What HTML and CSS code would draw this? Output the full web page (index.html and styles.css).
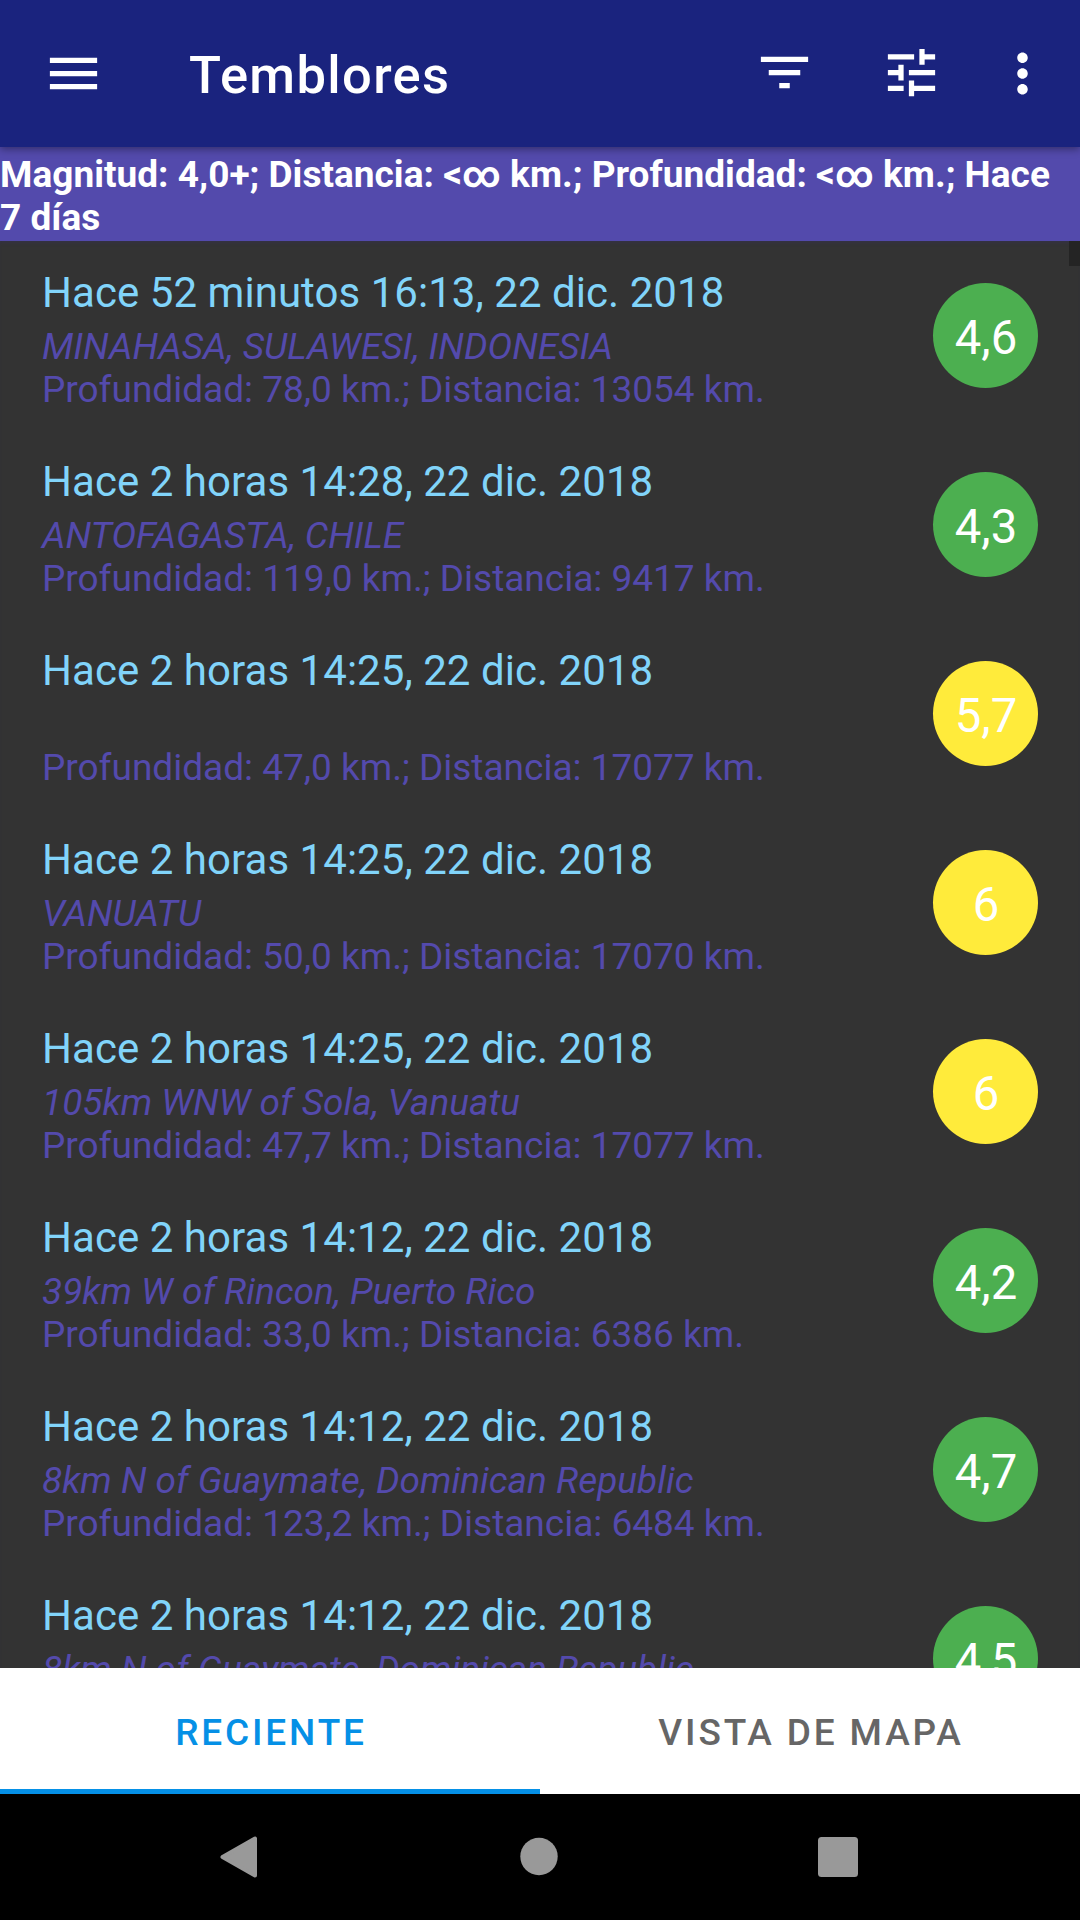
FILE: index.html
```html
<!DOCTYPE html>
<html lang="es">
<head>
<meta charset="utf-8">
<title>Temblores</title>
<link rel="stylesheet" href="styles.css">
</head>
<body>
<div class="screen">
  <header class="appbar">
    <svg class="icon" viewBox="0 0 24 24"><path d="M3 18h18v-2H3v2zm0-5h18v-2H3v2zm0-7v2h18V6H3z"/></svg>
    <h1 class="appbar-title">Temblores</h1>
    <div class="actions">
      <svg class="icon icon-raised" viewBox="0 0 24 24"><path d="M10 18h4v-2h-4v2zM3 6v2h18V6H3zm3 7h12v-2H6v2z"/></svg>
      <svg class="icon icon-raised" viewBox="0 0 24 24"><path d="M3 17v2h6v-2H3zM3 5v2h10V5H3zm10 16v-2h8v-2h-8v-2h-2v6h2zM7 9v2H3v2h4v2h2V9H7zm14 4v-2H11v2h10zm-6-4h2V7h4V5h-4V3h-2v6z"/></svg>
    </div>
    <svg class="icon" viewBox="0 0 24 24"><path d="M12 8c1.1 0 2-.9 2-2s-.9-2-2-2-2 .9-2 2 .9 2 2 2zm0 2c-1.1 0-2 .9-2 2s.9 2 2 2 2-.9 2-2-.9-2-2-2zm0 6c-1.1 0-2 .9-2 2s.9 2 2 2 2-.9 2-2-.9-2-2-2z"/></svg>
  </header>
  <p class="filters">Magnitud: 4,0+; Distancia: &lt;∞ km.; Profundidad: &lt;∞ km.; Hace 7 días</p>
  <main class="list">
    <div class="scroll-thumb"></div>
    <article class="quake">
      <div class="info"><h2 class="when">Hace 52 minutos 16:13, 22 dic. 2018</h2><p class="place">MINAHASA, SULAWESI, INDONESIA</p><p class="detail">Profundidad: 78,0 km.; Distancia: 13054 km.</p></div>
      <span class="mag">4,6</span>
    </article>
    <article class="quake">
      <div class="info"><h2 class="when">Hace 2 horas 14:28, 22 dic. 2018</h2><p class="place">ANTOFAGASTA, CHILE</p><p class="detail">Profundidad: 119,0 km.; Distancia: 9417 km.</p></div>
      <span class="mag">4,3</span>
    </article>
    <article class="quake">
      <div class="info"><h2 class="when">Hace 2 horas 14:25, 22 dic. 2018</h2><p class="place"></p><p class="detail">Profundidad: 47,0 km.; Distancia: 17077 km.</p></div>
      <span class="mag mag-strong">5,7</span>
    </article>
    <article class="quake">
      <div class="info"><h2 class="when">Hace 2 horas 14:25, 22 dic. 2018</h2><p class="place">VANUATU</p><p class="detail">Profundidad: 50,0 km.; Distancia: 17070 km.</p></div>
      <span class="mag mag-strong">6</span>
    </article>
    <article class="quake">
      <div class="info"><h2 class="when">Hace 2 horas 14:25, 22 dic. 2018</h2><p class="place">105km WNW of Sola, Vanuatu</p><p class="detail">Profundidad: 47,7 km.; Distancia: 17077 km.</p></div>
      <span class="mag mag-strong">6</span>
    </article>
    <article class="quake">
      <div class="info"><h2 class="when">Hace 2 horas 14:12, 22 dic. 2018</h2><p class="place">39km W of Rincon, Puerto Rico</p><p class="detail">Profundidad: 33,0 km.; Distancia: 6386 km.</p></div>
      <span class="mag">4,2</span>
    </article>
    <article class="quake">
      <div class="info"><h2 class="when">Hace 2 horas 14:12, 22 dic. 2018</h2><p class="place">8km N of Guaymate, Dominican Republic</p><p class="detail">Profundidad: 123,2 km.; Distancia: 6484 km.</p></div>
      <span class="mag">4,7</span>
    </article>
    <article class="quake">
      <div class="info"><h2 class="when">Hace 2 horas 14:12, 22 dic. 2018</h2><p class="place">8km N of Guaymate, Dominican Republic</p></div>
      <span class="mag">4,5</span>
    </article>
  </main>
  <nav class="tabs">
    <a class="tab tab-active">RECIENTE</a>
    <a class="tab">VISTA DE MAPA</a>
  </nav>
  <footer class="sysnav">
    <svg class="nav-icon" viewBox="0 0 48 48"><path d="M39 5.500V42.500L6.500 24z" fill="#999" stroke="#999" stroke-width="4" stroke-linejoin="round"/></svg>
    <svg class="nav-icon" viewBox="0 0 48 48"><circle cx="24" cy="23.500" r="18.700" fill="#999"/></svg>
    <svg class="nav-icon" viewBox="0 0 48 48"><rect x="4" y="4" width="40" height="40" rx="3.500" fill="#999"/></svg>
  </footer>
</div>
</body>
</html>
```

FILE: styles.css
```css
* {
  box-sizing: border-box;
  margin: 0;
  padding: 0;
}

body {
  font-family: Roboto, "Liberation Sans", sans-serif;
  background: #333;
}

.screen {
  display: flex;
  flex-direction: column;
  width: 1080px;
  height: 1920px;
  overflow: hidden;
}

.appbar {
  display: flex;
  align-items: center;
  height: 147px;
  padding: 0 26px 0 42px;
  background: #1a237e;
  box-shadow: 0 2px 8px rgba(0, 0, 0, 0.4);
  z-index: 1;
}

.icon {
  display: block;
  flex: none;
  width: 63px;
  height: 63px;
  fill: #fff;
}

.icon-raised {
  margin-bottom: 2px;
}

.appbar-title {
  flex: 1;
  margin-left: 84px;
  padding-top: 2px;
  font-size: 52.5px;
  font-weight: 500;
  line-height: 62px;
  letter-spacing: 1.35px;
  color: #fff;
}

.actions {
  display: flex;
  gap: 64px;
  margin-right: 48px;
}

.filters {
  height: 94px;
  padding: 6px 16px 0 0;
  background: #534aac;
  color: #fff;
  font-size: 37px;
  font-weight: 700;
  line-height: 43px;
  letter-spacing: 0.02px;
}

.list {
  position: relative;
  flex: 1;
  min-height: 0;
  overflow: hidden;
  background: #333;
  box-shadow: inset 0 4px 4px -3px #34304a;
}

.scroll-thumb {
  position: absolute;
  top: 0;
  right: 0;
  width: 11px;
  height: 25px;
  background: #242424;
}

.quake {
  display: flex;
  justify-content: space-between;
  align-items: center;
  height: 189px;
  padding: 0 42px;
}

.info {
  align-self: flex-start;
  padding-top: 27px;
}

.when {
  font-size: 42px;
  font-weight: 400;
  line-height: 49px;
  letter-spacing: 0.05px;
  color: #81d4fa;
}

.place,
.detail {
  height: 43px;
  font-size: 37px;
  line-height: 43px;
  color: #544aac;
}

.place {
  margin-top: 8px;
  font-style: italic;
}

.mag {
  width: 105px;
  height: 105px;
  border-radius: 50%;
  background: #4caf50;
  color: #fff;
  font-size: 47.25px;
  line-height: 111px;
  text-indent: 1px;
  text-align: center;
}

.mag-strong {
  background: #ffeb3b;
}

.tabs {
  display: flex;
  height: 126px;
  background: #fff;
}

.tab {
  flex: 1;
  padding-left: 2px;
  font-size: 37px;
  font-weight: 500;
  line-height: 130px;
  letter-spacing: 2.85px;
  text-align: center;
  color: #666;
}

.tab-active {
  color: #0590e6;
  border-bottom: 5px solid #0590e6;
}

.sysnav {
  display: flex;
  justify-content: center;
  gap: 251px;
  height: 126px;
  padding: 39px 2px 0 0;
  background: #000;
}

.nav-icon {
  width: 48px;
  height: 48px;
}
```
